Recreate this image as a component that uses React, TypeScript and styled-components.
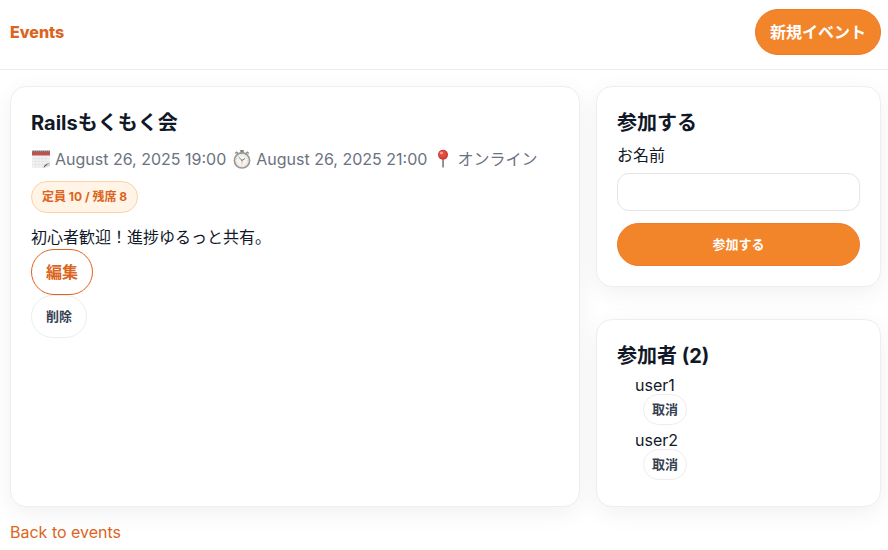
import React, { useState } from "react";
import styled, { createGlobalStyle, css } from "styled-components";

const GlobalStyle = createGlobalStyle`
  *, *::before, *::after { box-sizing: border-box; }
  body {
    margin: 0;
    background: #ffffff;
    color: #111827;
    font-family: Inter, "Noto Sans CJK JP", sans-serif;
    font-size: 16px;
    line-height: 24px;
  }
`;

const Header = styled.header`
  display: flex;
  align-items: center;
  justify-content: space-between;
  padding: 9px 7px 14px 10px;
  border-bottom: 1px solid #ececee;
`;

const Brand = styled.a`
  color: #dc6420;
  font-weight: 800;
  text-decoration: none;
`;

type Tone = "primary" | "outline" | "ghost";

const tones = {
  primary: css`
    color: #ffffff;
    background: #f28429;
    border-color: #f07a2a;
  `,
  outline: css`
    color: #dc6420;
    background: #ffffff;
    border-color: #dc6420;
  `,
  ghost: css`
    color: #374151;
    background: #ffffff;
    border-color: #ededef;
  `,
};

const pill = css<{ $tone: Tone }>`
  display: inline-block;
  padding: 10px 14px;
  border: 1px solid;
  border-radius: 24px;
  font-family: inherit;
  font-weight: 700;
  text-align: center;
  text-decoration: none;
  cursor: pointer;
  ${({ $tone }) => tones[$tone]}
`;

const LinkButton = styled.a<{ $tone: Tone }>`
  ${pill}
`;

const Button = styled.button<{ $tone: Tone; $wide?: boolean }>`
  ${pill}
  width: ${({ $wide }) => ($wide ? "100%" : "auto")};
  font-size: 13px;
  line-height: 21px;
`;

const SmallButton = styled(Button)`
  margin-left: 8px;
  padding: 4px 8px;
`;

const Main = styled.main`
  padding: 16px 7px 8px 10px;
`;

const Columns = styled.div`
  display: grid;
  grid-template-columns: 2fr 1fr;
  gap: 16px;
`;

const Side = styled.div`
  display: flex;
  flex-direction: column;
  gap: 32px;
`;

const Card = styled.section`
  padding: 20px;
  background: #ffffff;
  border: 1px solid #eeeeef;
  border-radius: 16px;
  box-shadow: 0 6px 24px rgba(0, 0, 0, 0.06);
`;

const Title = styled.h2`
  margin: 0 0 4px;
  font-size: 20px;
  line-height: 32px;
  font-weight: 700;
`;

const Meta = styled.div`
  display: flex;
  flex-wrap: wrap;
  gap: 6px;
  margin: 8px 0 10px;
  color: #6b7280;
`;

const MetaItem = styled.span`
  display: inline-flex;
  align-items: center;
  gap: 4px;
`;

const Badge = styled.span`
  display: inline-block;
  padding: 6px 10px;
  color: #dc6420;
  background: #fff4e6;
  border: 1px solid #fad3a6;
  border-radius: 16px;
  font-size: 12px;
  line-height: 18px;
  font-weight: 700;
`;

const Description = styled.p`
  margin: 12px 0 0;
`;

const Actions = styled.div`
  display: flex;
  flex-direction: column;
  align-items: flex-start;
`;

const Label = styled.label`
  display: block;
`;

const TextInput = styled.input`
  display: block;
  width: 100%;
  height: 38px;
  margin: 6px 0 12px;
  padding: 8px 12px;
  border: 1px solid #e5e5e7;
  border-radius: 12px;
  font: inherit;
`;

const People = styled.ul`
  margin: 0;
  padding: 0 0 0 18px;
  list-style: none;
`;

const Person = styled.li`
  display: flex;
  flex-direction: column;
  align-items: flex-start;
  margin-bottom: 6px;
  line-height: 18px;
`;

const BackLink = styled.a`
  display: inline-block;
  margin-top: 13px;
  color: #dc6420;
  text-decoration: none;
`;

const Icon = styled.svg`
  flex: none;
  width: 20px;
  height: 20px;
`;

const CalendarIcon = () => (
  <Icon viewBox="0 0 20 20" aria-hidden="true">
    <path d="M1 3h18v11l-5 5H1z" fill="#f1f1f2" />
    <path d="M1 9.5h17M1 12.5h16M1 15.5h14M4.5 7v12M8 7v12M11.5 7v12M15 7v9" stroke="#e2e2e5" strokeWidth=".6" />
    <path d="M1 2.5h18v4H1z" fill="#bd5350" />
    <path d="M1 1.5h18v1.5H1z" fill="#7d6668" />
    <path d="M1 1.8h18" stroke="#d9d4d4" strokeWidth="1" strokeDasharray="1 1" />
    <path d="M19 13.2l-6.5 5.8c.6-2 .9-3 2.3-3.6z" fill="#55565a" />
    <path d="M19 13.5V17l-5 2z" fill="#d5d5d8" />
  </Icon>
);

const StopwatchIcon = () => (
  <Icon viewBox="0 0 20 20" aria-hidden="true">
    <path d="M8.3 1h3.4v3H8.3z" fill="#85827e" />
    <path d="M3.2 4.6l1.5-1.4 1.4 1.5M16.8 4.6l-1.5-1.4-1.4 1.5" fill="none" stroke="#8d8b89" strokeWidth="1.3" />
    <circle cx="10" cy="11.4" r="7.6" fill="#f5f4f0" stroke="#9b9996" strokeWidth="1.7" />
    <circle cx="10" cy="11.4" r="5.7" fill="none" stroke="#bbb8b3" strokeWidth=".8" strokeDasharray=".5 1" />
    <path d="M10 11.4L6.7 8.2M10 11.4l3.2-2" stroke="#65615d" strokeWidth=".8" />
    <path d="M10 11.4v4" stroke="#d89b76" strokeWidth=".6" />
    <circle cx="10" cy="11.4" r=".8" fill="#b58068" />
  </Icon>
);

const PinIcon = () => (
  <Icon viewBox="0 0 20 20" aria-hidden="true">
    <path d="M9.2 9h1.7v9l-.8 1-.9-1z" fill="#8d8078" />
    <circle cx="10" cy="5.8" r="5" fill="#cf3a31" />
    <circle cx="9.6" cy="5.2" r="3.6" fill="#e24d42" />
    <ellipse cx="8.5" cy="4" rx="1.6" ry="1.2" fill="#f6a39b" />
  </Icon>
);

const participants = ["user1", "user2"];

export default function App() {
  const [name, setName] = useState("");
  return (
    <>
      <GlobalStyle />
      <Header>
        <Brand href="#events">Events</Brand>
        <LinkButton $tone="primary" href="#new">新規イベント</LinkButton>
      </Header>
      <Main>
        <Columns>
          <Card>
            <Title as="h1">Railsもくもく会</Title>
            <Meta>
              <MetaItem><CalendarIcon />August 26, 2025 19:00</MetaItem>
              <MetaItem><StopwatchIcon />August 26, 2025 21:00</MetaItem>
              <MetaItem><PinIcon />オンライン</MetaItem>
            </Meta>
            <Badge>定員 10 / 残席 8</Badge>
            <Description>初心者歓迎！進捗ゆるっと共有。</Description>
            <Actions>
              <LinkButton $tone="outline" href="#edit">編集</LinkButton>
              <Button $tone="ghost" type="button">削除</Button>
            </Actions>
          </Card>
          <Side>
            <Card>
              <Title>参加する</Title>
              <form onSubmit={(e) => e.preventDefault()}>
                <Label htmlFor="participant-name">お名前</Label>
                <TextInput id="participant-name" type="text" value={name} onChange={(e) => setName(e.target.value)} />
                <Button $tone="primary" $wide type="submit">参加する</Button>
              </form>
            </Card>
            <Card>
              <Title>参加者 (2)</Title>
              <People>
                {participants.map((person) => (
                  <Person key={person}>
                    {person}
                    <SmallButton $tone="ghost" type="button">取消</SmallButton>
                  </Person>
                ))}
              </People>
            </Card>
          </Side>
        </Columns>
        <BackLink href="#events">Back to events</BackLink>
      </Main>
    </>
  );
}
